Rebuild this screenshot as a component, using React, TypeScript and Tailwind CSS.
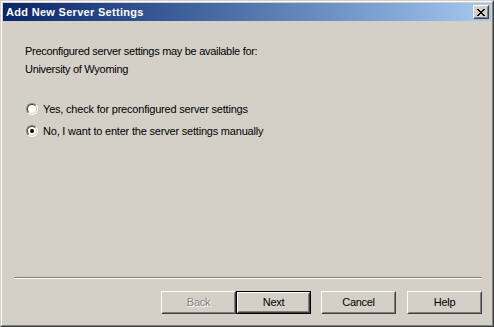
import React from "react";

const FONT = { fontFamily: '"Liberation Sans", Arial, sans-serif' };

function Radio({ checked }: { checked?: boolean }) {
  return (
    <span className="w-[12px] h-[12px] rounded-full border border-t-[#808080] border-l-[#808080] border-r-white border-b-white flex">
      <span className="flex-1 rounded-full border border-t-[#404040] border-l-[#404040] border-r-[#d4d0c8] border-b-[#d4d0c8] bg-white flex items-center justify-center">
        {checked && <span className="w-[4px] h-[4px] rounded-full bg-black" />}
      </span>
    </span>
  );
}

function Button({
  label,
  isDefault,
  disabled,
}: {
  label: string;
  isDefault?: boolean;
  disabled?: boolean;
}) {
  const inner = (
    <div className="flex-1 flex border border-t-white border-l-white border-r-[#404040] border-b-[#404040]">
      <div className="flex-1 flex items-center justify-center border border-t-[#d4d0c8] border-l-[#d4d0c8] border-r-[#808080] border-b-[#808080]">
        <span
          className={
            disabled
              ? "text-[11px] text-[#808080] [text-shadow:1px_1px_0_#ffffff] tracking-[-0.3px]"
              : "text-[11px] text-black tracking-[-0.3px]"
          }
        >
          {label}
        </span>
      </div>
    </div>
  );
  return (
    <div className={isDefault ? "w-[75px] h-[23px] flex border border-black" : "w-[75px] h-[23px] flex"}>
      {inner}
    </div>
  );
}

export default function App() {
  return (
    <div className="w-[494px] h-[327px] bg-[#d4d0c8] select-none" style={FONT}>
      <div className="w-full h-full flex border border-t-[#d4d0c8] border-l-[#d4d0c8] border-r-[#404040] border-b-[#404040]">
        <div className="flex-1 flex flex-col border border-t-white border-l-white border-r-[#808080] border-b-[#808080] p-px">
          {/* caption */}
          <div className="h-[18px] flex items-center bg-gradient-to-r from-[#0a246a] to-[#a6caf0] pl-[3px] pr-[2px]">
            <span className="flex-1 text-[11px] font-bold text-white tracking-[0.3px]">Add New Server Settings</span>
            <div className="w-[16px] h-[14px] flex border border-t-white border-l-white border-r-[#404040] border-b-[#404040] bg-[#d4d0c8]">
              <div className="flex-1 flex items-center justify-center border border-t-[#d4d0c8] border-l-[#d4d0c8] border-r-[#808080] border-b-[#808080]">
                <svg width="8" height="7" viewBox="0 0 8 7" shapeRendering="crispEdges">
                  <path
                    d="M0 0h2v1h-2zM6 0h2v1h-2zM1 1h2v1h-2zM5 1h2v1h-2zM2 2h4v1h-4zM3 3h2v1h-2zM2 4h4v1h-4zM1 5h2v1h-2zM5 5h2v1h-2zM0 6h2v1h-2zM6 6h2v1h-2z"
                    fill="#000"
                  />
                </svg>
              </div>
            </div>
          </div>

          {/* body */}
          <div className="flex-1 flex flex-col text-[11px] text-black tracking-[-0.3px]">
            <div className="pl-[22px] pt-[21px]">
              <div className="h-[18px] leading-[18px]">Preconfigured server settings may be available for:</div>
              <div className="h-[18px] leading-[18px]">University of Wyoming</div>
            </div>

            <div className="mt-[20px] pl-[23px] flex flex-col tracking-[-0.2px]">
              <label className="h-[22px] flex items-center gap-[5px]">
                <Radio />
                <span>Yes, check for preconfigured server settings</span>
              </label>
              <label className="h-[22px] flex items-center gap-[5px]">
                <Radio checked />
                <span>No, I want to enter the server settings manually</span>
              </label>
            </div>

            <div className="flex-1" />

            <div className="ml-[11px] mr-[9px] border-t border-t-[#808080] border-b border-b-white" />

            <div className="h-[45px] flex items-start justify-end pr-[9px] pt-[12px]">
              <Button label="Back" disabled />
              <Button label="Next" isDefault />
              <div className="w-[10px]" />
              <Button label="Cancel" />
              <div className="w-[11px]" />
              <Button label="Help" />
            </div>
          </div>
        </div>
      </div>
    </div>
  );
}
